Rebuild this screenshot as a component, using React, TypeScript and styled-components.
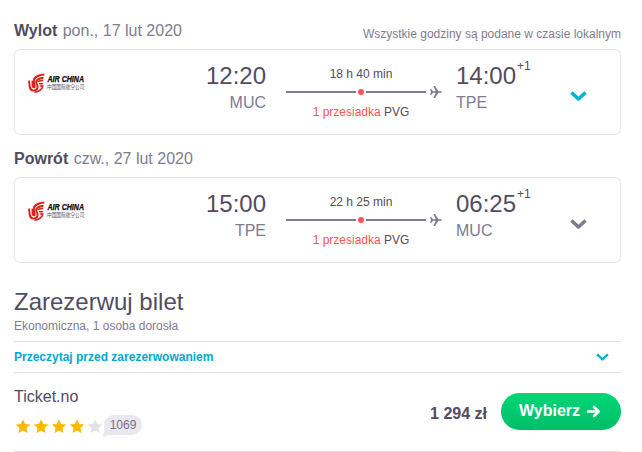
import React from "react";
import styled, { createGlobalStyle } from "styled-components";

const GlobalStyle = createGlobalStyle`
  body {
    margin: 0;
    background: #fff;
    color: #524c61;
    font-family: Arial, "Liberation Sans", "Noto Sans CJK SC", sans-serif;
    overflow: hidden;
  }
`;

const Page = styled.main`
  box-sizing: border-box;
  width: 642px;
  height: 452px;
  padding: 18px 21px 0 14px;
`;

const LegHeader = styled.div`
  display: flex;
  justify-content: space-between;
  height: 24px;
  margin-bottom: 7px;
  font-size: 16px;
  line-height: 26px;
  color: #817b8f;
`;

const Direction = styled.strong`
  margin-right: 1px;
  color: #524c61;
`;

const Note = styled.span`
  padding-top: 7px;
  font-size: 12px;
  line-height: 18px;
`;

const Card = styled.section`
  box-sizing: border-box;
  display: flex;
  height: 86px;
  margin-bottom: 11px;
  border: 1px solid #e6e4eb;
  border-radius: 6px;
`;

const Logo = styled.svg`
  flex: none;
  margin: 22px 0 0 13px;
  overflow: visible;
`;

const Stop = styled.div<{ $align: "left" | "right" }>`
  width: 80px;
  margin-left: ${(props) => (props.$align === "right" ? "98px" : "14px")};
  padding-top: 11px;
  text-align: ${(props) => props.$align};
`;

const Time = styled.div<{ $end?: boolean }>`
  display: flex;
  justify-content: ${(props) => (props.$end ? "flex-end" : "flex-start")};
  height: 30px;
  font-size: 24px;
  line-height: 30px;
`;

const DayOffset = styled.span`
  margin-left: 1px;
  font-size: 12px;
  line-height: 10px;
`;

const Airport = styled.div`
  font-size: 16px;
  line-height: 24px;
  color: #817b8f;
`;

const Route = styled.div`
  width: 156px;
  margin-left: 20px;
  padding-top: 15px;
  font-size: 12px;
  line-height: 18px;
`;

const RouteText = styled.div`
  width: 150px;
  text-align: center;
`;

const RouteLine = styled.svg`
  display: block;
  margin: 2px 0 4px;
`;

const Transfer = styled.span`
  color: #ff5452;
`;

const Toggle = styled.button`
  display: flex;
  align-items: center;
  height: 84px;
  margin-left: 34px;
  padding: 9px 0 0;
  border: 0;
  background: none;
`;

const BookingTitle = styled.h2`
  margin: 24px 0 0;
  font-size: 24px;
  font-weight: 400;
  line-height: 30px;
`;

const BookingInfo = styled.div`
  margin-bottom: 6px;
  font-size: 12px;
  line-height: 18px;
  color: #817b8f;
`;

const ReadMore = styled.div`
  display: flex;
  align-items: center;
  justify-content: space-between;
  height: 30px;
  padding-right: 12px;
  border-top: 1px solid #e1e0e6;
  border-bottom: 1px solid #e1e0e6;
  font-size: 12px;
  font-weight: 700;
  color: #00a9d2;
`;

const Offer = styled.div`
  display: flex;
  height: 78px;
  border-bottom: 1px solid #e1e0e6;
`;

const Agent = styled.div`
  flex: 1;
  padding-top: 12px;
  font-size: 16px;
  line-height: 24px;
`;

const Rating = styled.div`
  display: flex;
  margin-top: 6px;
`;

const Stars = styled.svg`
  margin-top: 4px;
`;

const Reviews = styled.span`
  position: relative;
  box-sizing: border-box;
  width: 38px;
  height: 20px;
  border-radius: 10px;
  background: #e9e8ee;
  font-size: 12px;
  line-height: 20px;
  text-align: center;
  color: #746e80;
`;

const Tail = styled.svg`
  position: absolute;
  left: -2px;
  bottom: -3px;
`;

const Price = styled.div`
  padding: 29px 14px 0 0;
  font-size: 16px;
  font-weight: 700;
  line-height: 24px;
`;

const SelectButton = styled.button`
  display: flex;
  align-items: center;
  justify-content: center;
  gap: 6px;
  width: 120px;
  height: 37px;
  margin-top: 20px;
  padding: 0 2px 1px 0;
  border: 0;
  border-radius: 19px;
  background: linear-gradient(#00d775, #00bd68);
  color: #fff;
  font: 700 16px/24px Arial, "Liberation Sans", sans-serif;
`;

const AirChina = () => (
  <Logo width="60" height="28" viewBox="0 0 60 28">
    <g fill="none" stroke="#df1f19">
      <path d="M1 8.6 C1.6 13 1 18.6 5.5 18.6 C10 18.4 10.3 14.5 8.6 11.6 C7 8.5 10 6.4 15.5 5.8" strokeWidth="1.9" />
      <path d="M4.4 8.6 C4.8 11.5 4 15.4 5.8 15.4 C7.3 15.2 6.8 12.6 6 10.8 C4.8 6.5 8 3.4 16.3 2.6" strokeWidth="2" />
      <path d="M9.6 9.6 Q12 8.5 15 8.4 M11 11.8 H15 M11.8 14 H14.8 C14 17.5 11 19.6 6.5 20.2" strokeWidth="1.5" />
    </g>
    <text x="19.5" y="10" fontSize="8.2" fontWeight="700" fontStyle="italic" textLength="36.5" lengthAdjust="spacingAndGlyphs" fill="#080808" stroke="#080808" strokeWidth=".25">AIR CHINA</text>
    <text x="19" y="17.3" fontFamily="Noto Sans CJK SC, sans-serif" fontSize="5.6" textLength="37.5" lengthAdjust="spacingAndGlyphs" fill="#555">中国国际航空公司</text>
  </Logo>
);

const Chevron = ({ color, small = false }: { color: string; small?: boolean }) => (
  <svg width={small ? 13 : 17} height={small ? 9 : 11} viewBox="0 0 17 11">
    <path d="M1.5 1.5 L8.5 8 L15.5 1.5" fill="none" stroke={color} strokeWidth={small ? 3 : 3.5} strokeLinejoin="round" />
  </svg>
);

type LegProps = {
  from: string;
  to: string;
  departure: string;
  arrival: string;
  duration: string;
  color: string;
};

const Leg = ({ from, to, departure, arrival, duration, color }: LegProps) => (
  <Card>
    <AirChina />
    <Stop $align="right">
      <Time $end>{departure}</Time>
      <Airport>{from}</Airport>
    </Stop>
    <Route>
      <RouteText>{duration}</RouteText>
      <RouteLine width="156" height="14" viewBox="0 0 156 14">
        <path d="M0 7 H70 M80 7 H140" stroke="#817b8f" strokeWidth="2" />
        <circle cx="75" cy="7" r="3" fill="#ff5452" />
        <path d="M144 4 H145.2 L147 6.2 H149.7 L147.5 1 H149 L152.5 6.2 H155 Q156 6.5 156 7 Q156 7.5 155 7.8 H152.5 L149 13 H147.5 L149.7 7.8 H147 L145.2 10 H144 L145 7 Z" fill="#817b8f" />
      </RouteLine>
      <RouteText>
        <Transfer>1 przesiadka</Transfer> PVG
      </RouteText>
    </Route>
    <Stop $align="left">
      <Time>
        {arrival}
        <DayOffset>+1</DayOffset>
      </Time>
      <Airport>{to}</Airport>
    </Stop>
    <Toggle>
      <Chevron color={color} />
    </Toggle>
  </Card>
);

const STAR = "M7.5 0.5 L9.7 5 L14.7 5.6 L11 9 L12 14 L7.5 11.5 L3 14 L4 9 L0.3 5.6 L5.3 5 Z";

const App = () => (
  <>
    <GlobalStyle />
    <Page>
      <LegHeader>
        <span>
          <Direction>Wylot</Direction> pon., 17 lut 2020
        </span>
        <Note>Wszystkie godziny są podane w czasie lokalnym</Note>
      </LegHeader>
      <Leg from="MUC" to="TPE" departure="12:20" arrival="14:00" duration="18 h 40 min" color="#00b2d6" />
      <LegHeader>
        <span>
          <Direction>Powrót</Direction> czw., 27 lut 2020
        </span>
      </LegHeader>
      <Leg from="TPE" to="MUC" departure="15:00" arrival="06:25" duration="22 h 25 min" color="#817b8f" />
      <BookingTitle>Zarezerwuj bilet</BookingTitle>
      <BookingInfo>Ekonomiczna, 1 osoba dorosła</BookingInfo>
      <ReadMore>
        Przeczytaj przed zarezerwowaniem
        <Chevron color="#00b2d6" small />
      </ReadMore>
      <Offer>
        <Agent>
          Ticket.no
          <Rating>
            <Stars width="90" height="15" viewBox="0 0 90 15">
              {[0, 1, 2, 3, 4].map((index) => (
                <path key={index} d={STAR} transform={`translate(${index * 18 + 1.5} 0)`} fill={index < 4 ? "#ffb800" : "#e4e2e9"} />
              ))}
            </Stars>
            <Reviews>
              1069
              <Tail width="12" height="13" viewBox="0 0 12 13">
                <path d="M2.5 0 Q3 7 0.5 11 Q0.5 13 2.5 12 Q5 10 12 10 Z" fill="#e9e8ee" />
              </Tail>
            </Reviews>
          </Rating>
        </Agent>
        <Price>1 294 zł</Price>
        <SelectButton>
          Wybierz
          <svg width="15" height="14" viewBox="0 0 15 14">
            <path d="M2 7.5 H12.5 M8 3 L12.7 7.5 L8 12" fill="none" stroke="#fff" strokeWidth="2.6" strokeLinecap="round" strokeLinejoin="round" />
          </svg>
        </SelectButton>
      </Offer>
    </Page>
  </>
);

export default App;
